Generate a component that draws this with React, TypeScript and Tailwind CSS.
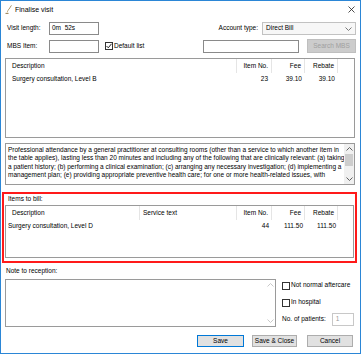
import React from 'react';

const Chevron = ({ dir, color = '#606060' }: { dir: 'up' | 'down'; color?: string }) => (
  <svg width="7" height="4" viewBox="0 0 7 4">
    <path d={dir === 'up' ? 'M0.5 3.5 L3.5 0.5 L6.5 3.5' : 'M0.5 0.5 L3.5 3.5 L6.5 0.5'} fill="none" stroke={color} strokeWidth="1" />
  </svg>
);

const Checkbox = ({ checked }: { checked?: boolean }) => (
  <div className="w-[8px] h-[8px] border border-[#333333] bg-white flex items-center justify-center">
    {checked && (
      <svg width="6" height="6" viewBox="0 0 6 6">
        <path d="M0.5 3 L2.3 4.8 L5.5 0.8" fill="none" stroke="#222222" strokeWidth="1" />
      </svg>
    )}
  </div>
);

const HeaderCell = ({ children, right, pl }: { children?: React.ReactNode; right?: boolean; pl?: string }) => (
  <div className={`h-[14px] flex items-center border-r border-[#e5e5e5] ${right ? 'justify-end pr-[3px]' : pl}`}>
    {children}
  </div>
);

const App = () => {
  return (
    <div className="w-[361px] h-[354px] border border-[#2b86d6] bg-white flex flex-col font-['Liberation_Sans',Arial,sans-serif] text-[6.5px] text-black leading-none overflow-hidden">
      {/* title bar */}
      <div className="h-[17px] flex items-center shrink-0">
        <svg className="ml-[4px]" width="8" height="9" viewBox="0 0 8 9">
          <path d="M6.8 0.6 L2.6 6.4 L1.8 7.6 L2.2 6.2 L6.2 0.3 Z" fill="#8a6a2a" />
          <path d="M2.6 6.4 L1.6 8 L2.9 6.8 Z" fill="#c98a1e" />
          <path d="M0.5 8.4 H3.5" stroke="#7a5a20" strokeWidth="0.8" />
        </svg>
        <span className="ml-[2px] text-[7px]">Finalise visit</span>
        <svg className="ml-auto mr-[5px]" width="7" height="7" viewBox="0 0 7 7">
          <path d="M0.5 0.5 L6.5 6.5 M6.5 0.5 L0.5 6.5" stroke="#222222" strokeWidth="0.8" />
        </svg>
      </div>

      {/* visit length row */}
      <div className="flex items-center h-[13px] mt-[4px] shrink-0">
        <span className="ml-[6px] w-[42px]">Visit length:</span>
        <div className="w-[50px] h-[13px] border border-[#8a8a8a] flex items-center pl-[2px]">0m&nbsp;&nbsp;52s</div>
        <span className="ml-auto">Account type:</span>
        <div className="ml-[4px] mr-[4px] w-[94px] h-[13px] border border-[#c2c2c2] bg-[#f7f7f7] flex items-center pl-[3px] pr-[3px]">
          <span>Direct Bill</span>
          <span className="ml-auto"><Chevron dir="down" color="#7a7a7a" /></span>
        </div>
      </div>

      {/* MBS item row */}
      <div className="flex items-center h-[14px] mt-[4px] shrink-0">
        <span className="ml-[6px] w-[42px]">MBS Item:</span>
        <div className="w-[50px] h-[13px] border border-[#8a8a8a]" />
        <div className="ml-[6px]"><Checkbox checked /></div>
        <span className="ml-[1px]">Default list</span>
        <div className="ml-auto w-[96px] h-[13px] border border-[#8a8a8a]" />
        <div className="ml-[8px] mr-[4px] w-[49px] h-[14px] border border-[#bfbfbf] bg-[#cccccc] text-[#a0a0a0] flex items-center justify-center">
          Search MBS
        </div>
      </div>

      {/* MBS list */}
      <div className="ml-[4px] mr-[5px] mt-[5px] h-[80px] border border-[#9a9a9a] shrink-0">
        <div className="grid grid-cols-[231px_35px_33px_33px_1fr]">
          <HeaderCell pl="pl-[6px]">Description</HeaderCell>
          <HeaderCell right>Item No.</HeaderCell>
          <HeaderCell right>Fee</HeaderCell>
          <HeaderCell right>Rebate</HeaderCell>
          <div />
          <div className="h-[12px] flex items-center pl-[6px]">Surgery consultation, Level B</div>
          <div className="h-[12px] flex items-center justify-end pr-[4px]">23</div>
          <div className="h-[12px] flex items-center justify-end pr-[3px]">39.10</div>
          <div className="h-[12px] flex items-center justify-end pr-[3px]">39.10</div>
          <div />
        </div>
      </div>

      {/* description text */}
      <div className="ml-[4px] mr-[5px] mt-[5px] h-[42px] border border-[#9a9a9a] flex shrink-0">
        <div className="flex-1 pl-[2px] pt-[2px] leading-[8.3px] overflow-hidden whitespace-nowrap">
          <div>Professional attendance by a general practitioner at consulting rooms (other than a service to which another item in</div>
          <div>the table applies), lasting less than 20 minutes and including any of the following that are clinically relevant: (a) taking</div>
          <div>a patient history; (b) performing a clinical examination; (c) arranging any necessary investigation; (d) implementing a</div>
          <div>management plan; (e) providing appropriate preventive health care; for one or more health-related issues, with</div>
        </div>
        <div className="w-[10px] bg-[#f0f0f0] flex flex-col items-center">
          <div className="h-[10px] flex items-center"><Chevron dir="up" /></div>
          <div className="w-[8px] h-[12px] bg-[#cdcdcd]" />
          <div className="mt-auto h-[10px] flex items-center"><Chevron dir="down" /></div>
        </div>
      </div>

      {/* items to bill (highlighted) */}
      <div className="ml-[1px] mr-[3px] mt-[7px] h-[71px] border-2 border-[#ff1a1a] flex flex-col shrink-0">
        <div className="h-[11px] flex items-center pl-[4px]">Items to bill:</div>
        <div className="ml-[1px] mr-[1px] h-[53px] border border-[#9a9a9a]">
          <div className="grid grid-cols-[134px_97px_35px_33px_33px_1fr]">
            <HeaderCell pl="pl-[6px]">Description</HeaderCell>
            <HeaderCell pl="pl-[3px]">Service text</HeaderCell>
            <HeaderCell right>Item No.</HeaderCell>
            <HeaderCell right>Fee</HeaderCell>
            <HeaderCell right>Rebate</HeaderCell>
            <div />
            <div className="h-[12px] flex items-center pl-[2px] whitespace-nowrap">Surgery consultation, Level D</div>
            <div />
            <div className="h-[12px] flex items-center justify-end pr-[3px]">44</div>
            <div className="h-[12px] flex items-center justify-end pr-[2px]">111.50</div>
            <div className="h-[12px] flex items-center justify-end pr-[2px]">111.50</div>
            <div />
          </div>
        </div>
      </div>

      {/* note to reception */}
      <div className="h-[10px] mt-[3px] flex items-center pl-[5px] shrink-0">Note to reception:</div>
      <div className="flex mt-[3px] h-[48px] shrink-0">
        <div className="ml-[4px] w-[271px] border border-[#9a9a9a] flex justify-end">
          <div className="w-[10px] flex flex-col items-center">
            <div className="h-[10px] flex items-center"><Chevron dir="up" color="#c8c8c8" /></div>
            <div className="mt-auto h-[10px] flex items-center"><Chevron dir="down" color="#c8c8c8" /></div>
          </div>
        </div>
        <div className="ml-[6px] flex flex-col">
          <div className="flex items-center mt-[2px] h-[9px]">
            <Checkbox />
            <span className="ml-[1px]">Not normal aftercare</span>
          </div>
          <div className="flex items-center mt-[8px] h-[9px]">
            <Checkbox />
            <span className="ml-[1px]">In hospital</span>
          </div>
          <div className="flex items-center mt-[6px] h-[13px]">
            <span>No. of patients:</span>
            <div className="ml-[6px] w-[22px] h-[13px] border border-[#c8c8c8] flex items-center pl-[3px] text-[#9a9a9a]">1</div>
          </div>
        </div>
      </div>

      {/* buttons */}
      <div className="flex mt-[8px] h-[12px] shrink-0">
        <div className="ml-[196px] w-[47px] h-[12px] border border-[#0078d7] bg-[#e1e1e1] flex items-center justify-center">Save</div>
        <div className="ml-[8px] w-[45px] h-[12px] border border-[#adadad] bg-[#e1e1e1] flex items-center justify-center">Save &amp; Close</div>
        <div className="ml-[10px] w-[46px] h-[12px] border border-[#adadad] bg-[#e1e1e1] flex items-center justify-center">Cancel</div>
      </div>
    </div>
  );
};

export default App;
